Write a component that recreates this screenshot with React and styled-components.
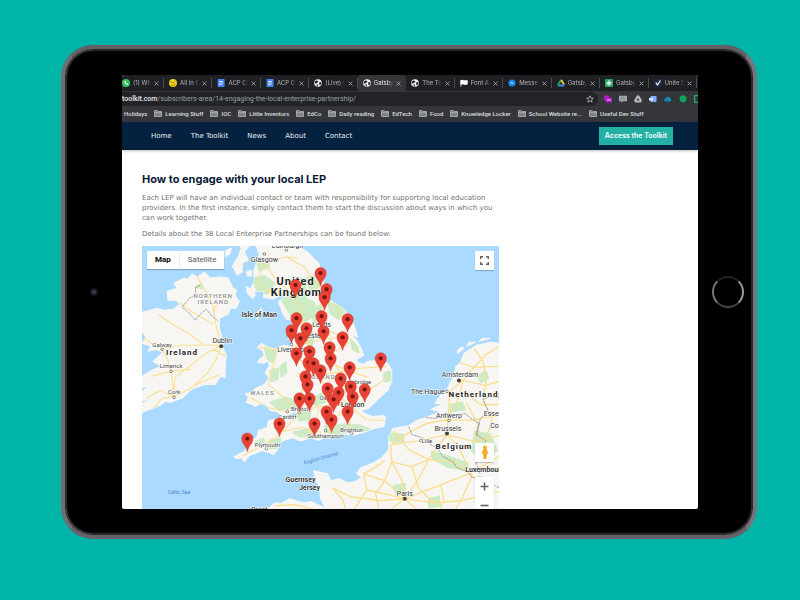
import React from 'react';
import styled, {createGlobalStyle} from 'styled-components';

const GlobalStyle = createGlobalStyle
    `
      * {
        box-sizing: border-box;
      }

      body {
        margin: 0;
        background-color: #00b4a8;
        font-family: Inter, "Open Sans", sans-serif;
      }

      button {
        border: 0;
        padding: 0;
        font-family: inherit;
        cursor: pointer;
      }

      a {
        color: inherit;
        text-decoration: none;
      }
    `;

const Desk = styled.div
    `
      display: flex;
      min-height: 100vh;
      padding: 45px 43px 62px 61px;
    `;

const Tablet = styled.div
    `
      flex: 1;
      display: grid;
      grid-template-columns: 57px minmax(0, 1fr) 55px;
      padding: 26px 0;
      background-color: #000;
      border: 4px solid;
      border-color: #625f66 #77757a #68616b #6f6d74;
      border-radius: 32px;
      box-shadow: inset 0 0 0 1px #2a282c, inset 0 0 2px 1px #99959c;
    `;

const Bezel = styled.div
    `
      display: flex;
      align-items: center;
      justify-content: ${({$align}) => $align};
      padding-right: ${({$inset}) => $inset || 0}px;
    `;

const Camera = styled.div
    `
      width: 8px;
      height: 8px;
      border-radius: 50%;
      border: 2px solid #17171c;
      background-color: #3c3f58;
    `;

const HomeButton = styled.button
    `
      width: 32px;
      height: 32px;
      border-radius: 50%;
      background-color: #000;
      border: 2px solid;
      border-color: #222 #999 #444 #777;
    `;

const Screen = styled.div
    `
      display: flex;
      flex-direction: column;
      min-width: 0;
      overflow: hidden;
      background-color: #fff;
      border-radius: 2px;
    `;

const TabStrip = styled.div
    `
      display: grid;
      grid-template-columns: 42px repeat(11, minmax(0, 1fr));
      height: 16px;
      padding-right: 1px;
      background-color: #1f2023;
    `;

const TabItem = styled.div
    `
      display: flex;
      align-items: center;
      gap: 3px;
      padding: 0 5px 0 ${({$first}) => ($first ? 0 : 5)}px;
      min-width: 0;
      color: ${({$active}) => ($active ? '#e8eaed' : '#b4b7bb')};
      background-color: ${({$active}) => ($active ? '#35363a' : 'transparent')};
      border-radius: 3px 3px 0 0;
      background-image: ${({$active}) => ($active ? 'none' : 'linear-gradient(#4a4c50, #4a4c50)')};
      background-size: 1px 10px;
      background-position: right center;
      background-repeat: no-repeat;

      svg {
        flex: none;
      }
    `;

const TabTitle = styled.span
    `
      flex: 1;
      min-width: 0;
      overflow: hidden;
      white-space: nowrap;
      font-size: 6px;
      line-height: 10px;
      mask-image: linear-gradient(to right, #000 75%, transparent);
    `;

const TabClose = styled.button
    `
      display: flex;
      background: none;
      color: #b4b7bb;
    `;

const AddressRow = styled.div
    `
      display: flex;
      align-items: center;
      height: 16px;
      background-color: #35363a;
    `;

const AddressBar = styled.div
    `
      flex: 1;
      display: flex;
      align-items: center;
      justify-content: space-between;
      height: 14px;
      padding-right: 4px;
      font-size: 7px;
      font-family: Roboto, sans-serif;
      color: #9aa0a6;
      background-color: #222326;
      border-radius: 0 7px 7px 0;

      b {
        color: #e8eaed;
        font-weight: 500;
      }
    `;

const Extensions = styled.div
    `
      display: flex;
      align-items: center;
      gap: 7px;
      padding-left: 6px;
    `;

const Bookmarks = styled.nav
    `
      display: flex;
      align-items: center;
      gap: 7px;
      height: 15px;
      padding: 0 2px 2px;
      white-space: nowrap;
      color: #dcdee1;
      background-color: #35363a;
      font-size: 6px;
      font-family: Roboto, sans-serif;
      font-weight: 500;
    `;

const Bookmark = styled.a
    `
      display: flex;
      align-items: center;
      gap: 3px;
    `;

const SiteHeader = styled.header
    `
      display: flex;
      align-items: center;
      justify-content: space-between;
      height: 28px;
      padding: 0 25px 0 29px;
      background-color: #04223f;
      box-shadow: 0 1px 3px rgba(0, 0, 0, 0.25);
      font-size: 7px;
    `;

const SiteNav = styled.nav
    `
      display: flex;
      gap: 19px;
      color: #e9edf1;
      font-family: "DejaVu Sans", sans-serif;
    `;

const AccessLink = styled.a
    `
      padding: 0 6px;
      line-height: 18px;
      color: #fff;
      background-color: #23b0a5;
      font-size: 7px;
      font-weight: 600;
      white-space: nowrap;
    `;

const Article = styled.main
    `
      width: 62%;
      margin-left: 20px;
      padding-top: 22px;
    `;

const Title = styled.h1
    `
      margin: 0 0 7px;
      font-size: 11px;
      line-height: 14px;
      font-weight: 700;
      color: #0a1a35;
    `;

const Paragraph = styled.p
    `
      margin: 0 0 6px;
      font-family: "DejaVu Sans", sans-serif;
      font-size: 7px;
      line-height: 10px;
      color: #707070;
    `;

const MapFrame = styled.section
    `
      position: relative;
      margin-top: 7px;
      overflow: hidden;
      font-family: Roboto, sans-serif;
    `;

const MapCanvas = styled.svg
    `
      display: block;
      width: 100%;
      height: auto;
      background-color: #aadaff;
    `;

const MapTypes = styled.div
    `
      position: absolute;
      top: 5px;
      left: 5px;
      display: flex;
      background-color: #fff;
      box-shadow: 0 1px 1px rgba(0, 0, 0, 0.25);
    `;

const MapType = styled.button
    `
      padding: 0 8px;
      line-height: 18px;
      font-size: 8px;
      background: none;
      color: ${({$active}) => ($active ? '#000' : '#565656')};
      font-weight: ${({$active}) => ($active ? 700 : 400)};

      & + & {
        border-left: 1px solid #ececec;
      }
    `;

const MapControls = styled.div
    `
      position: absolute;
      top: 5px;
      right: 5px;
      bottom: -6px;
      display: flex;
      flex-direction: column;
    `;

const MapControl = styled.button
    `
      display: flex;
      align-items: center;
      justify-content: center;
      width: 19px;
      height: 19px;
      margin-top: ${({$push}) => $push || 0};
      background-color: #fff;
      color: #666;
      box-shadow: 0 1px 1px rgba(0, 0, 0, 0.2);
    `;

const favicons = {
    whatsapp: <><circle cx="4" cy="4" r="4" fill="#2fc351"/><path d="M.3 7.8 1 5.6 2.6 7z" fill="#2fc351"/><path d="M2.6 2c-1 1.3 1.4 4.2 3.4 3.9l.4-1-1.2-.7-.6.5-1-1.2.4-.6-.5-1.1z" fill="#fff"/></>,
    trello: <><circle cx="4" cy="4" r="4" fill="#f4cf24"/><path d="M1 2.6 4 4 6.5 2M2 6c2 .8 4 .2 5-1.4" fill="none" stroke="#5f5200" strokeWidth=".5"/></>,
    docs: <><rect x=".6" width="7" height="8" rx=".7" fill="#4285f4"/><path d="M2 2.5h4M2 4h4M2 5.5h3" stroke="#fff" strokeWidth=".7"/></>,
    globe: <><circle cx="4" cy="4" r="3.8" fill="#f1f3f4"/><path d="M1 2.2 2.7 1.5 4.4 2l-.6 1.5-1.3.4-.3 1L.8 4zM5.4 2.9l1.8.3.1 1.5-1.3 1.8-.8-1zM2.6 5.3l1.5.4-.4 1.7-1.1-.4z" fill="#25272b"/></>,
    flag: <path d="M.8 1v6.5M1 1.5c1.5-.8 2.6.8 6.3 0v3.7c-3 .9-4-.8-6.3 0z" fill="#fff" stroke="#fff" strokeWidth=".8"/>,
    messenger: <><circle cx="4" cy="4" r="3.6" fill="#1686f5"/><path d="M1.7 5 3.5 3l1.1 1 1.6-1-1.8 2-1.1-.9z" fill="#fff"/></>,
    drive: <><path d="M3 .8h2.2L8 5.6H5.8z" fill="#fbc934"/><path d="M3 .8 0 5.8l1.2 1.8 3-5z" fill="#22a365"/><path d="M2.4 5.6H8L6.8 7.6H1.2z" fill="#4285f4"/></>,
    sheets: <><rect width="8" height="8" rx=".5" fill="#23a566"/><path d="M1.5 3.4h5M4 1.2v5.6M1.5 5h5" stroke="#fff" strokeWidth="1"/></>,
    unite: <><rect width="8" height="8" rx="1" fill="#1c2a48"/><path d="m1.8 3.7 1.7 2.3L6.4 1.5" fill="none" stroke="#fff" strokeWidth="1.2"/></>,
};

const tabs = [
    {icon: 'whatsapp', title: '(1) Wha'},
    {icon: 'trello', title: 'All in O'},
    {icon: 'docs', title: 'ACP Co'},
    {icon: 'docs', title: 'ACP Co'},
    {icon: 'globe', title: '(Live) G'},
    {icon: 'globe', title: 'Gatsby', active: true},
    {icon: 'globe', title: 'The Too'},
    {icon: 'flag', title: 'Font Aw'},
    {icon: 'messenger', title: 'Messen'},
    {icon: 'drive', title: 'Gatsby'},
    {icon: 'sheets', title: 'Gatsby'},
    {icon: 'unite', title: 'Unite S'},
];

const bookmarks = ['Learning Stuff', 'IOC', 'Little Inventors', 'EdCo', 'Daily reading', 'EdTech', 'Food',
    'Knowledge Locker', 'School Website re...', 'Useful Dev Stuff'];

const pages = ['Home', 'The Toolkit', 'News', 'About', 'Contact'];

// map drawing units: x 142-498, y 246-508
const pins = [
    [320, 273], [295, 285], [326, 289], [324, 297], [321, 316], [296, 318], [347, 319], [306, 328], [291, 330],
    [323, 331], [342, 337], [300, 338], [329, 347], [309, 351], [296, 353], [330, 358], [380, 358], [308, 362],
    [313, 363], [349, 367], [320, 370], [305, 376], [340, 378], [307, 384], [350, 386], [327, 388], [364, 389],
    [338, 392], [352, 396], [309, 398], [299, 398], [333, 399], [326, 411], [347, 411], [331, 419], [314, 423],
    [279, 423], [247, 438],
];

const land = [
    // Great Britain
    'M256 246 259 255 256 263 253 272 254 281 250 289 246 286 247 293 252 298 255 295 254 291 264 291 263 297 273 299 282 294 285 295 278 302 280 307 282 313 286 319 292 320 291 328 289 334 292 342 289 346 283 345 275 349 268 347 261 343 257 347 262 350 264 355 260 358 257 362 263 363 268 361 269 365 265 372 269 378 264 384 255 388 252 392 245 393 248 397 246 402 252 404 255 406 260 403 266 405 270 410 276 411 283 415 290 413 297 411 293 418 283 420 276 419 268 420 267 427 258 430 257 436 248 443 245 450 234 456 236 458 241 457 244 461 249 455 257 452 262 450 269 452 273 454 277 449 278 443 283 440 293 437 298 440 302 440 310 437 318 440 322 438 330 436 340 433 346 434 352 435 363 432 373 428 383 426 385 417 383 415 372 416 364 413 360 410 368 408 372 404 378 398 387 390 391 381 391 370 387 363 380 360 367 361 363 364 357 362 356 359 363 355 360 347 356 340 350 334 357 337 354 327 349 315 342 308 333 302 329 300 327 290 322 280 321 271 318 263 313 258 307 252 297 247 292 246z',
    // Ireland
    'M142 312 150 310 157 308 164 310 173 309 180 304 176 300 168 300 167 291 177 288 174 283 184 278 188 279 192 274 197 277 204 272 210 278 219 277 228 278 232 287 236 290 235 296 239 301 236 308 230 308 228 314 219 318 219 328 222 338 223 348 226 355 225 367 225 377 220 376 215 384 204 384 193 388 189 391 183 397 170 402 165 401 160 405 152 408 142 412V403L150 399 142 400V391L150 386 142 387V376L151 370 161 366 153 361 163 352 156 349 148 351 151 346 142 343 146 337 142 331z',
    // Continent
    'M498 343 488 342 481 344 475 345 463 353 459 363 455 366 453 375 446 389 441 393 434 403 443 403 430 409 440 411 425 417 416 420 408 425 392 428 388 436 388 449 381 457 373 462 360 467 356 473 361 477 354 481 347 482 338 478 330 480 327 473 313 470 315 479 319 486 320 498 325 508H498z',
    'M267 508 275 502 281 503 289 498 296 500 303 502 311 501 326 508z',
    // islands
    'M255 315 261 308 262 312 257 319z', 'M232 266 238 257 241 248 239 246H249L244 252 248 260 242 263 242 272 237 275z',
    'M225 251 231 248 230 253 225 257z', 'M246 272 251 270 251 276 247 276z',
    'M457 353 463 348 460 347 456 351z', 'M466 346 474 342 468 342z', 'M478 341 489 338 481 338z',
];

const greens = [
    'M252 278 264 276 274 283 267 294 257 291z', 'M281 299 296 294 313 302 317 313 305 321 292 317z',
    'M306 278 317 275 320 286 310 290z', 'M328 303 340 304 345 310 338 319 330 313z', 'M350 339 357 347 358 352 352 349z',
    'M303 330 314 333 311 345 304 342z', 'M264 347 275 351 272 362 267 358z', 'M270 370 278 368 277 379 271 381z',
    'M270 402 286 397 296 402 296 407 278 409z', 'M269 440 280 438 279 447 270 448z', 'M293 432 310 428 315 436 300 436z',
    'M324 426 345 424 360 425 369 429 346 432 328 433z', 'M296 412 310 411 309 419 299 420z', 'M345 383 354 380 355 389 346 391z',
    'M388 433 402 434 403 442 389 440z', 'M431 451 448 456 467 463 465 469 446 466 432 458z', 'M393 485 404 483 404 491 395 493z',
    'M428 498 438 496 439 505 428 507z', 'M450 404 461 402 464 409 450 411z', 'M257 264 267 262 269 267 259 270z',
    'M474 431 489 434 496 450 479 459 471 450z', 'M195 287 201 284 202 288z', 'M300 278 305 285 305 297 299 292z',
    'M310 310 320 305 321 314 314 322z', 'M280 366 285 362 286 372 281 376z', 'M383 373 389 371 390 380 384 381z',
    'M312 398 322 393 325 401 315 405z', 'M256 441 263 438 264 443 258 445z', 'M477 376 485 371 487 378 480 382z',
];

const roads = 'M264 262 273 276 287 290 297 303 303 324 308 346 314 368 325 386 348 404 M264 262 286 257 297 258 M286 257 304 267 316 285 323 310 330 340 335 365 347 385 349 404 M297 320 315 326 332 332 345 339 M289 347 303 344 321 339 341 337 M305 352 319 369 330 381 M296 373 312 377 330 373 358 368 386 366 M299 412 318 406 348 404 362 405 M297 414 286 427 277 436 263 444 243 455 M289 412 268 407 250 397 M348 404 350 432 M348 404 365 419 384 420 M348 404 332 420 324 434 M348 404 372 387 386 377 M318 407 315 423 306 437 M299 411 302 388 310 371 296 355 M259 347 278 350 M277 350 273 365 268 384 284 398 299 411 M282 431 301 427 321 432 M152 409 162 398 174 396 188 389 202 381 220 374 M221 345 204 354 187 368 175 377 173 397 M221 345 216 359 207 373 194 385 M221 345 216 326 213 309 222 299 232 295 M221 345 203 345 181 345 162 348 M204 345 190 334 174 325 158 314 M162 349 168 360 171 371 174 397 M190 369 171 371 151 376 M215 311 203 286 197 277 M180 303 194 313 213 324 M143 337 153 344 162 348 M146 398 160 390 174 396 M213 349 225 356 M263 263 258 280 265 290 284 294 M324 352 337 350 349 342 M335 365 349 371 368 377 M344 322 337 308 326 299';

const euroRoads = 'M404 498 401 479 391 461 390 444 M404 498 417 479 428 459 446 434 447 419 458 397 462 380 473 367 485 354 498 346 M404 498 384 480 363 473 M404 498 381 500 350 496 332 487 M404 498 440 484 468 473 498 456 M404 498 433 502 460 500 498 491 M404 498 415 508 M404 498 391 508 M390 444 408 432 425 423 447 419 467 420 498 415 M390 444 419 440 446 434 474 441 498 435 M428 459 408 449 393 430 M428 459 453 461 471 475 487 493 488 508 M391 461 410 466 428 459 M446 434 458 447 471 475 460 500 455 508 M462 380 449 391 447 419 M462 380 484 385 498 381 M458 362 473 367 498 366 M473 348 482 361 485 380 482 400 491 419 485 438 493 454 M463 391 479 404 498 404 M332 487 342 499 345 508 M363 473 366 489 354 508 M384 480 375 493 378 508 M275 505 294 504 312 508 M440 484 443 500 439 508 M365 489 384 493 404 498 M474 441 477 423 465 402 M384 460 371 469 363 473 M411 466 418 488 433 502 M391 461 384 480';

const borders = 'M200 285 195 288 196 295 189 298 182 307 190 314 195 320 199 315 206 309 212 316 218 321 M408 426 411 434 421 437 430 444 437 448 442 456 452 461 456 467 466 471 472 477 480 476 488 482 498 487 M425 417 435 418 446 413 455 415 464 413 470 418 478 423 475 434 485 440 480 447 M476 435 479 419 487 410 482 399 490 396 498 397 M479 455 475 462 479 473';

const dots = [[264, 254], [286, 250], [162, 349], [171, 371], [174, 397], [287, 411], [299, 412], [266, 448], [351, 433],
    [325, 430], [420, 440], [446, 391], [448, 420], [291, 344]];
const capitals = [[221, 346], [458, 380], [446, 433], [404, 498]];

const labels = [
    {text: 'Edinburgh', x: 287, y: 248},
    {text: 'Glasgow', x: 264, y: 262},
    {text: 'NORTHERN', x: 213, y: 298, kind: 'region'},
    {text: 'IRELAND', x: 213, y: 304, kind: 'region'},
    {text: 'Isle of Man', x: 259, y: 317, kind: 'isle'},
    {text: 'Galway', x: 162, y: 347, kind: 'town'},
    {text: 'Ireland', x: 182, y: 355, kind: 'country'},
    {text: 'Dublin', x: 222, y: 343},
    {text: 'Limerick', x: 171, y: 368, kind: 'town'},
    {text: 'Cork', x: 174, y: 394, kind: 'town'},
    {text: 'Leeds', x: 321, y: 327},
    {text: 'Manchester', x: 304, y: 338},
    {text: 'Liverpool', x: 291, y: 352},
    {text: 'ENGLAND', x: 318, y: 379, kind: 'region'},
    {text: 'WALES', x: 262, y: 395, kind: 'region'},
    {text: 'Cambridge', x: 356, y: 384, kind: 'town'},
    {text: 'Oxford', x: 328, y: 400, kind: 'town'},
    {text: 'London', x: 352, y: 407, kind: 'city'},
    {text: 'Bristol', x: 299, y: 410, kind: 'town'},
    {text: 'Cardiff', x: 287, y: 418, kind: 'town'},
    {text: 'Southampton', x: 325, y: 437, kind: 'town'},
    {text: 'Brighton', x: 351, y: 431, kind: 'town'},
    {text: 'Plymouth', x: 267, y: 446, kind: 'town'},
    {text: 'Guernsey', x: 300, y: 481, kind: 'isle'},
    {text: 'Jersey', x: 309, y: 489, kind: 'isle'},
    {text: 'Brest', x: 259, y: 511},
    {text: 'Celtic Sea', x: 179, y: 493, kind: 'sea'},
    {text: 'Amsterdam', x: 459, y: 377},
    {text: 'The Hague', x: 427, y: 394},
    {text: 'Netherlands', x: 475, y: 397, kind: 'country'},
    {text: 'Antwerp', x: 448, y: 417},
    {text: 'Essen', x: 492, y: 415},
    {text: 'Cologne', x: 502, y: 427},
    {text: 'Brussels', x: 447, y: 430},
    {text: 'Lille', x: 426, y: 442, kind: 'town'},
    {text: 'Belgium', x: 453, y: 448, kind: 'country'},
    {text: 'Luxembourg', x: 484, y: 471, kind: 'isle'},
    {text: 'Paris', x: 404, y: 495},
];

const PlaceLabel = styled.text
    `
      text-anchor: middle;
      fill: #333;
      stroke: #fff;
      stroke-width: 1px;
      stroke-linejoin: round;
      paint-order: stroke;
      font-size: 7px;

      &.town {
        font-size: 6px;
        fill: #444;
      }

      &.city {
        font-weight: 500;
      }

      &.nation {
        font-size: 11px;
        font-weight: 700;
        letter-spacing: 1px;
        fill: #222;
      }

      &.country {
        font-size: 8px;
        font-weight: 700;
        letter-spacing: 1px;
        fill: #222;
      }

      &.isle {
        font-weight: 700;
      }

      &.region {
        font-size: 6px;
        letter-spacing: 1px;
        font-weight: 500;
        fill: #888;
      }

      &.sea {
        font-size: 5px;
        fill: #4a86cf;
        stroke: none;
      }
    `;

function Favicon({name}) {
    return <svg width="8" height="8" viewBox="0 0 8 8" aria-hidden="true">{favicons[name]}</svg>;
}

function Tab({icon, title, active, first}) {
    return (
        <TabItem $active={active} $first={first}>
            <Favicon name={icon}/>
            <TabTitle>{title}</TabTitle>
            <TabClose aria-label="Close tab">
                <svg width="5" height="5" viewBox="0 0 5 5">
                    <path d="M.6.6l3.8 3.8M4.4.6.6 4.4" stroke="currentColor" strokeWidth=".8"/>
                </svg>
            </TabClose>
        </TabItem>
    );
}

function Folder() {
    return (
        <svg width="8" height="7" viewBox="0 0 8 7" aria-hidden="true">
            <path d="M.5.6h2.7l.8.9h3.5v5h-7z" fill="#7d8085" stroke="#b3b6ba" strokeWidth=".8"/>
            <path d="M.5 2.7h7" stroke="#c5c7ca" strokeWidth=".6"/>
        </svg>
    );
}

function ExtensionIcons() {
    return (
        <Extensions>
            <svg width="8" height="8" viewBox="0 0 8 8"><path d="M0 .5h5v2h3v5H1.5V5H0z" fill="#b01cc4"/><path d="M3 5h4" stroke="#f0c5f4"/></svg>
            <svg width="8" height="8" viewBox="0 0 8 8"><path d="M0 .8h8v5.4H4L2.4 7.8V6.2H0z" fill="#a5a7aa"/><path d="M1.5 2.6h5M1.5 4.2h5" stroke="#77797c" strokeWidth=".6"/></svg>
            <svg width="8" height="8" viewBox="0 0 8 8"><path d="M3 .6h2.2L8 5.6 6.8 7.6H1.2L0 5.6z" fill="#b7b9bc"/><path d="m4 3 1.4 2.6H2.6z" fill="#35363a"/></svg>
            <svg width="8" height="8" viewBox="0 0 8 8"><rect x="1.5" y="1" width="6" height="6" rx=".6" fill="#80aefc"/><path d="M0 3h4v2.5H0z" fill="#dce8fd"/></svg>
            <svg width="8" height="8" viewBox="0 0 8 8"><path d="M1.5 6.4a1.5 1.5 0 0 1 .2-3 2.3 2.3 0 0 1 4.3-.2 1.7 1.7 0 0 1 .4 3.2z" fill="#1688b5"/></svg>
            <svg width="8" height="8" viewBox="0 0 8 8"><circle cx="4" cy="3.7" r="3.4" fill="#10a45b"/><path d="M2.5 6.4h3L4 8z" fill="#10a45b"/></svg>
            <svg width="4" height="8" viewBox="0 0 4 8"><path d="M4 .6H.6v6.8H4" fill="none" stroke="#1eb06c" strokeWidth="1.2"/></svg>
        </Extensions>
    );
}

function Pin({x, y}) {
    return (
        <g transform={`translate(${x} ${y})`}>
            <path d="M0 13C-.8 7.5-5.6 5-5.6 0a5.6 5.6 0 0 1 11.2 0C5.6 5 .8 7.5 0 13z" fill="#ea4335" stroke="#c9352a"
                  strokeWidth=".5"/>
            <circle r="2.1" fill="#751411"/>
        </g>
    );
}

function PartnershipMap() {
    return (
        <MapFrame aria-label="Local Enterprise Partnerships">
            <MapCanvas viewBox="142 246 356 262">
                <defs>
                    <clipPath id="land">
                        {land.map((d) => <path key={d} d={d}/>)}
                    </clipPath>
                </defs>
                {land.map((d) => (
                    <path key={d} d={d} fill="#f8f6f2" stroke="#f8f6f2" strokeWidth="1" strokeLinejoin="round"/>
                ))}
                <g clipPath="url(#land)" strokeLinejoin="round">
                    {greens.map((d) => (
                        <path key={d} d={d} fill="#cdebc4" stroke="#cdebc4" strokeWidth="2"/>
                    ))}
                    <path d={roads} fill="none" stroke="#fadf93" strokeWidth="1.1"/>
                    <path d={euroRoads} fill="none" stroke="#fadf93" strokeWidth="1.4"/>
                </g>
                <path d={borders} fill="none" stroke="#85858a" strokeWidth=".7" strokeDasharray="3 .6"/>
                {dots.map(([x, y]) => (
                    <circle key={`${x}-${y}`} cx={x} cy={y} r="1.3" fill="#fff" stroke="#555" strokeWidth=".7"/>
                ))}
                {capitals.map(([x, y]) => <circle key={x} cx={x} cy={y} r="2" fill="#444"/>)}
                <PlaceLabel className="nation">
                    <tspan x="297" y="285">United </tspan>
                    <tspan x="296" y="296">Kingdom</tspan>
                </PlaceLabel>
                {labels.map(({text, x, y, kind}) => (
                    <PlaceLabel key={text} x={x} y={y} className={kind}>{text}</PlaceLabel>
                ))}
                <PlaceLabel className="sea" transform="translate(321 459) rotate(-16)">English Channel</PlaceLabel>
                {pins.map(([x, y]) => <Pin key={`${x}-${y}`} x={x} y={y}/>)}
            </MapCanvas>
            <MapTypes>
                <MapType $active>Map</MapType>
                <MapType>Satellite</MapType>
            </MapTypes>
            <MapControls>
                <MapControl aria-label="Toggle fullscreen">
                    <svg width="9" height="9" viewBox="0 0 9 9">
                        <path d="M.7 3V.7H3M6 .7h2.3V3M8.3 6v2.3H6M3 8.3H.7V6" fill="none" stroke="currentColor" strokeWidth="1.4"/>
                    </svg>
                </MapControl>
                <MapControl $push="auto" aria-label="Street View">
                    <svg width="10" height="15" viewBox="0 0 10 15">
                        <path d="M3 4.6h4L8.5 9l-1 .5-.7-1.3L6.5 14h-3l-.3-5.8-.7 1.3-1-.5z" fill="#f5b52a"/>
                        <path d="M5 8.5V14" stroke="#c88412" strokeWidth=".6"/>
                        <circle cx="5" cy="2.7" r="2.1" fill="#f5b52a"/>
                        <path d="M3.2 4.6h3.6L5 5.8z" fill="#d18c15"/>
                    </svg>
                </MapControl>
                <MapControl $push="15px" aria-label="Zoom in">
                    <svg width="9" height="9" viewBox="0 0 9 9">
                        <path d="M4.5.5v8M.5 4.5h8" stroke="currentColor" strokeWidth="1.6"/>
                    </svg>
                </MapControl>
                <MapControl aria-label="Zoom out">
                    <svg width="9" height="9" viewBox="0 0 9 9">
                        <path d="M.5 4.5h8" stroke="currentColor" strokeWidth="1.6"/>
                    </svg>
                </MapControl>
            </MapControls>
        </MapFrame>
    );
}

function Browser() {
    return (
        <>
            <TabStrip>
                {tabs.map((tab, i) => <Tab key={i} first={i === 0} {...tab}/>)}
            </TabStrip>
            <AddressRow>
                <AddressBar>
                    <span><b>toolkit.com</b>/subscribers-area/14-engaging-the-local-enterprise-partnership/</span>
                    <svg width="8" height="8" viewBox="0 0 8 8">
                        <path d="m4 .8 1 2.2 2.3.2-1.8 1.6.6 2.3L4 5.9 1.9 7.1l.6-2.3L.7 3.2 3 3z" fill="none" stroke="#d5d7da"
                              strokeWidth=".7"/>
                    </svg>
                </AddressBar>
                <ExtensionIcons/>
            </AddressRow>
            <Bookmarks>
                <Bookmark href="#">Holidays</Bookmark>
                {bookmarks.map((name) => (
                    <Bookmark href="#" key={name}><Folder/>{name}</Bookmark>
                ))}
            </Bookmarks>
        </>
    );
}

function App() {
    return (
        <Desk>
            <GlobalStyle/>
            <Tablet>
                <Bezel $align="center"><Camera/></Bezel>
                <Screen>
                    <Browser/>
                    <SiteHeader>
                        <SiteNav>
                            {pages.map((page) => <a href="#" key={page}>{page}</a>)}
                        </SiteNav>
                        <AccessLink href="#">Access the Toolkit</AccessLink>
                    </SiteHeader>
                    <Article>
                        <Title>How to engage with your local LEP</Title>
                        <Paragraph>
                            Each LEP will have an individual contact or team with responsibility for supporting local
                            education providers. In the first instance, simply contact them to start the discussion
                            about ways in which you can work together.
                        </Paragraph>
                        <Paragraph>Details about the 38 Local Enterprise Partnerships can be found below:</Paragraph>
                        <PartnershipMap/>
                    </Article>
                </Screen>
                <Bezel $align="flex-end" $inset={9}><HomeButton aria-label="Home"/></Bezel>
            </Tablet>
        </Desk>
    );
}

export default App;
